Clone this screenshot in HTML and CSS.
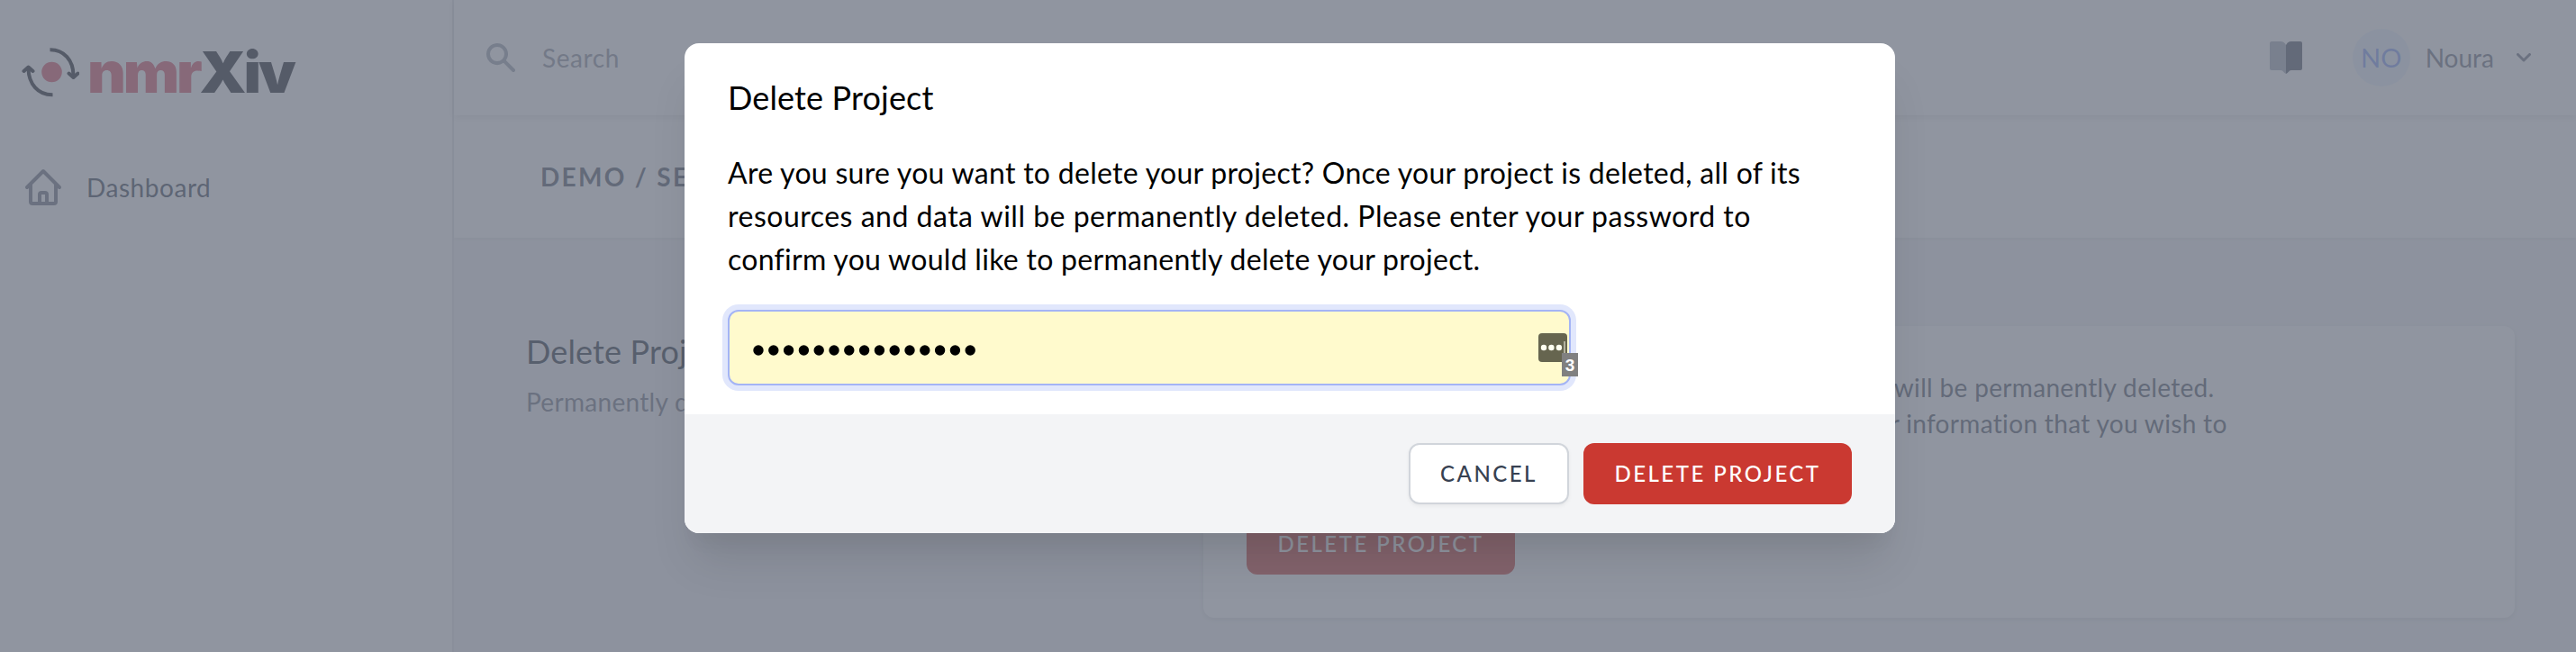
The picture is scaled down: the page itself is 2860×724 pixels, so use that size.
FILE: index.html
```html
<!DOCTYPE html>
<html lang="en">
<head>
<meta charset="utf-8">
<title>nmrXiv</title>
<link rel="stylesheet" href="styles.css">
</head>
<body>
<div class="app">
  <aside class="sidebar">
    <div class="logo">
      <svg class="logo-mark" viewBox="-1 0 64 56" fill="none">
        <circle cx="32.5" cy="28" r="11.3" fill="#d94f66"/>
        <g stroke="#151821" stroke-width="4" stroke-linejoin="round">
          <path d="M30.500 3.200C46 3 56.500 15 56.500 32" />
          <path d="M51.500 29.500L56.500 34L61.500 29.500" stroke-linecap="round"/>
          <path d="M33.500 53.200C17 53.500 6.800 41 6.500 24"/>
          <path d="M1.500 27L6.500 22.500L11.500 27" stroke-linecap="round"/>
        </g>
      </svg>
      <span class="logo-text"><span class="logo-nmr">nmr</span><span class="logo-xiv">Xiv</span></span>
    </div>
    <nav class="nav">
      <a class="nav-item">
        <svg class="nav-icon" viewBox="0 0 24 24" fill="none" stroke="currentColor" stroke-width="2" stroke-linecap="round" stroke-linejoin="round"><path d="M3 12l2-2m0 0l7-7 7 7M5 10v10a1 1 0 001 1h3m10-11l2 2m-2-2v10a1 1 0 01-1 1h-3m-6 0a1 1 0 001-1v-4a1 1 0 011-1h2a1 1 0 011 1v4a1 1 0 001 1m-6 0h6"/></svg>
        <span>Dashboard</span>
      </a>
    </nav>
  </aside>
  <div class="main">
    <header class="topbar">
      <svg class="search-icon" viewBox="0 0 20 20" fill="currentColor"><path fill-rule="evenodd" clip-rule="evenodd" d="M8 4a4 4 0 100 8 4 4 0 000-8zM2 8a6 6 0 1110.890 3.476l4.817 4.817a1 1 0 01-1.414 1.414l-4.816-4.816A6 6 0 012 8z"/></svg>
      <span class="search-text">Search</span>
      <svg class="book" viewBox="0 0 36 36"><path fill="#a5abb8" d="M2 0H12Q16 0 18 4V36Q16 35 14 32.500Q13.500 32 12 32H2Q0 32 0 30V2Q0 0 2 0Z"/><path fill="#4b5563" d="M34 0H24Q20 0 18 4V36Q20 35 22 32.500Q22.500 32 24 32H34Q36 32 36 30V2Q36 0 34 0Z"/></svg>
      <span class="avatar">NO</span>
      <span class="user">Noura</span>
      <svg class="chevron" viewBox="0 0 16 10" fill="none" stroke="currentColor" stroke-width="3" stroke-linecap="round" stroke-linejoin="round"><path d="M1.500 1.500L8 8L14.500 1.500"/></svg>
    </header>
    <div class="crumbs">DEMO / SETTINGS</div>
    <div class="content">
      <div class="intro">
        <h3 class="intro-title">Delete Project</h3>
        <p class="intro-text">Permanently delete your project.</p>
      </div>
      <div class="card">
        <p class="card-text">Once your project is deleted, all of its resources and data will be permanently deleted.<br>Before deleting your project, please download any data or information that you wish to<br>retain.</p>
        <button class="btn btn-danger">Delete Project</button>
      </div>
    </div>
  </div>
</div>
<div class="overlay">
  <div class="modal">
    <div class="modal-body">
      <h2 class="modal-title">Delete Project</h2>
      <p class="modal-text"><span class="tight">Are you sure you want to delete your project? Once your project is deleted, all of its</span><br>resources and data will be permanently deleted. Please enter your password to<br><span class="tight">confirm you would like to permanently delete your project.</span></p>
      <div class="field">
        <svg class="dots" viewBox="0 0 248 12"><path d="M6 6H242" stroke="#000" stroke-width="11.400" stroke-linecap="round" stroke-dasharray="0 16.800"/></svg>
        <svg class="manager" viewBox="0 0 32 32"><rect width="32" height="32" rx="4" fill="#66654f"/><g fill="#fffff0"><circle cx="6" cy="16" r="3.200"/><circle cx="14.400" cy="16" r="3.200"/><circle cx="22.900" cy="16" r="3.200"/><rect x="28.500" y="9" width="1" height="14"/></g></svg>
        <span class="count">3</span>
      </div>
    </div>
    <div class="modal-footer">
      <button class="btn btn-plain">Cancel</button>
      <button class="btn btn-danger">Delete Project</button>
    </div>
  </div>
</div>
</body>
</html>
```
FILE: styles.css
```css
* { box-sizing: border-box; }
body { margin: 0; font-family: Lato, "Noto Sans", sans-serif; color: #000; }
h2, h3, p { margin: 0; font-weight: 400; }
.app { display: flex; width: 2860px; height: 724px; overflow: hidden; background: #f3f4f6; }

.sidebar { width: 504px; flex: none; background: #fff; border-right: 2px solid #e5e7eb; padding-top: 44px; }
.logo { display: flex; align-items: center; height: 72px; padding-left: 24px; }
.logo-mark { width: 64px; height: 56px; }
.logo-text { margin-left: 9px; font: 900 63px/72px Inter, sans-serif; letter-spacing: -3px; white-space: nowrap; transform: scaleX(1.05); transform-origin: left; }
.logo-nmr { color: #d94f66; }
.logo-xiv { color: #151821; }
.nav { padding: 68px 24px 0; }
.nav-item { display: flex; align-items: center; gap: 24px; height: 48px; font-size: 28px; color: #374151; letter-spacing: 0.550px; }
.nav-icon { width: 48px; height: 48px; color: #6b7280; }

.main { flex: 1; display: flex; flex-direction: column; }
.topbar { position: relative; flex: none; display: flex; align-items: center; height: 128px; padding: 0 50px 0 32px; background: #fff; box-shadow: 0 2px 8px rgba(0, 0, 0, 0.120); font-size: 28px; color: #6b7280; }
.search-icon { width: 40px; height: 40px; color: #9ca3af; }
.search-text { margin-left: 26px; color: #8b909c; letter-spacing: 0.600px; }
.book { width: 36px; height: 36px; margin-left: auto; }
.avatar { width: 64px; height: 64px; margin-left: 56px; border-radius: 50%; background: #ebf4ff; color: #7f9cf5; text-align: center; line-height: 64px; font-size: 29px; }
.user { margin-left: 17px; }
.chevron { width: 16px; height: 10px; margin-left: 25px; }

.crumbs { flex: none; height: 136px; padding-left: 96px; line-height: 136px; background: #fff; box-shadow: 0 2px 4px rgba(0, 0, 0, 0.060); font-size: 28px; font-weight: 700; letter-spacing: 2.300px; color: #4b5563; }
.content { display: flex; padding: 98px 68px 0 80px; }
.intro { width: 752px; }
.intro-title { font-size: 36px; line-height: 56px; color: #1f2937; letter-spacing: 0.150px; }
.intro-text { margin-top: 8px; font-size: 28px; line-height: 40px; color: #6b7280; letter-spacing: 0.300px; }
.card { flex: 1; height: 324px; padding: 48px; border-radius: 12px; background: #fff; box-shadow: 0 2px 6px rgba(0, 0, 0, 0.100); }
.card-text { font-size: 28px; line-height: 40px; color: #4b5563; white-space: nowrap; margin-bottom: 40px; letter-spacing: 0.330px; }

.btn { display: inline-flex; align-items: center; justify-content: center; height: 68px; padding: 0 0 2px; border: 2px solid transparent; border-radius: 12px; font-family: inherit; font-size: 24px; font-weight: 500; letter-spacing: 2.500px; text-transform: uppercase; }
.btn-danger { width: 298px; background: #ca3931; color: #fff; }
.btn-plain { width: 178px; background: #fff; border-color: #d1d5db; color: #374151; box-shadow: 0 2px 4px rgba(0, 0, 0, 0.050); }

.overlay { position: absolute; inset: 0; padding: 48px 0 0 760px; background: rgba(107, 114, 128, 0.750); }
.modal { width: 1344px; height: 544px; border-radius: 16px; overflow: hidden; background: #fff; box-shadow: 0 40px 50px -10px rgba(0, 0, 0, 0.100), 0 20px 20px -10px rgba(0, 0, 0, 0.040); }
.modal-body { height: 412px; padding: 32px 48px 0; }
.modal-title { font-size: 36px; line-height: 56px; letter-spacing: 0.150px; }
.modal-text { margin-top: 32px; font-size: 32px; line-height: 48px; white-space: nowrap; letter-spacing: 0.500px; }
.tight { letter-spacing: 0.290px; }
.field { position: relative; display: flex; align-items: center; width: 936px; height: 84px; margin-top: 32px; padding: 0 2px 0 26px; border: 2px solid #a4b4f5; border-radius: 12px; background: #fffacd; box-shadow: 0 0 0 6px #e1e7fc; }
.dots { width: 248px; height: 12px; margin-top: 5px; overflow: visible; }
.manager { width: 32px; height: 32px; margin-left: auto; }
.count { position: absolute; right: -10px; bottom: 8px; width: 18px; height: 26px; background: #808080; color: #fff; font: 700 19px/27px "Liberation Sans", sans-serif; text-align: center; }
.modal-footer { display: flex; justify-content: flex-end; gap: 16px; height: 132px; padding: 32px 48px; background: #f3f4f6; }
```
